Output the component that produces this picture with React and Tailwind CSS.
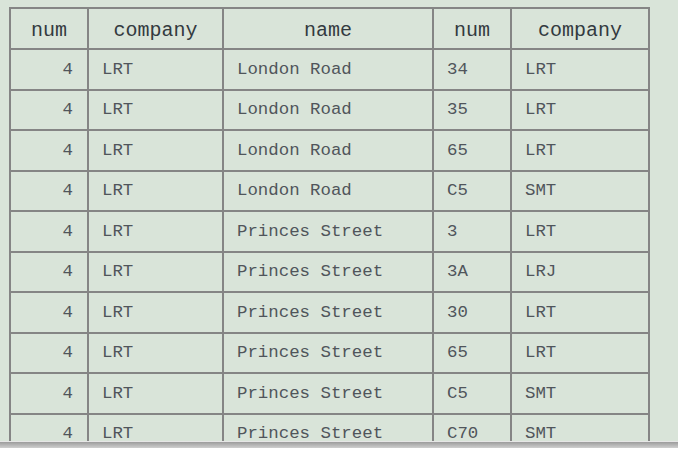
import React from 'react';

const rows = [
  ['4', 'LRT', 'London Road', '34', 'LRT'],
  ['4', 'LRT', 'London Road', '35', 'LRT'],
  ['4', 'LRT', 'London Road', '65', 'LRT'],
  ['4', 'LRT', 'London Road', 'C5', 'SMT'],
  ['4', 'LRT', 'Princes Street', '3', 'LRT'],
  ['4', 'LRT', 'Princes Street', '3A', 'LRJ'],
  ['4', 'LRT', 'Princes Street', '30', 'LRT'],
  ['4', 'LRT', 'Princes Street', '65', 'LRT'],
  ['4', 'LRT', 'Princes Street', 'C5', 'SMT'],
  ['4', 'LRT', 'Princes Street', 'C70', 'SMT'],
  ['4', 'LRT', 'Princes Street', 'X', 'SMT'],
];

const heads = ['num', 'company', 'name', 'num', 'company'];
const widths = ['w-[78px]', 'w-[135px]', 'w-[210px]', 'w-[78px]', 'w-[138px]'];

export default function App() {
  return (
    <div className="w-[678px] h-[454px] bg-white overflow-hidden" style={{ fontFamily: '"Liberation Mono", "DejaVu Sans Mono", monospace' }}>
      <div className="h-[441px] overflow-hidden bg-[#d9e4d9] pt-[7px] pl-[9px]">
        <table className="border-collapse border-2 border-[#858585] table-fixed w-[641px]">
          <thead>
            <tr className="h-[41px]">
              {heads.map((h, i) => (
                <th key={i} className={`${widths[i]} border-2 border-[#858585] text-[20px] font-normal text-[#333a40] text-center p-0 pt-[5px]`}>
                  {h}
                </th>
              ))}
            </tr>
          </thead>
          <tbody>
            {rows.map((r, ri) => (
              <tr key={ri} className="h-[40.5px]">
                {r.map((c, ci) => (
                  <td
                    key={ci}
                    className={`border-2 border-[#858585] text-[17.4px] text-[#50555b] p-0 pt-[1px] ${ci === 0 ? 'text-right pr-[14px]' : 'text-left pl-[13px]'}`}
                  >
                    {c}
                  </td>
                ))}
              </tr>
            ))}
          </tbody>
        </table>
      </div>
      <div className="h-px bg-[#e6e6e6]" />
      <div className="h-[6px] bg-gradient-to-b from-[#9c9c9c] to-[#cfcfcf]" />
      <div className="h-[6px] bg-white" />
    </div>
  );
}
